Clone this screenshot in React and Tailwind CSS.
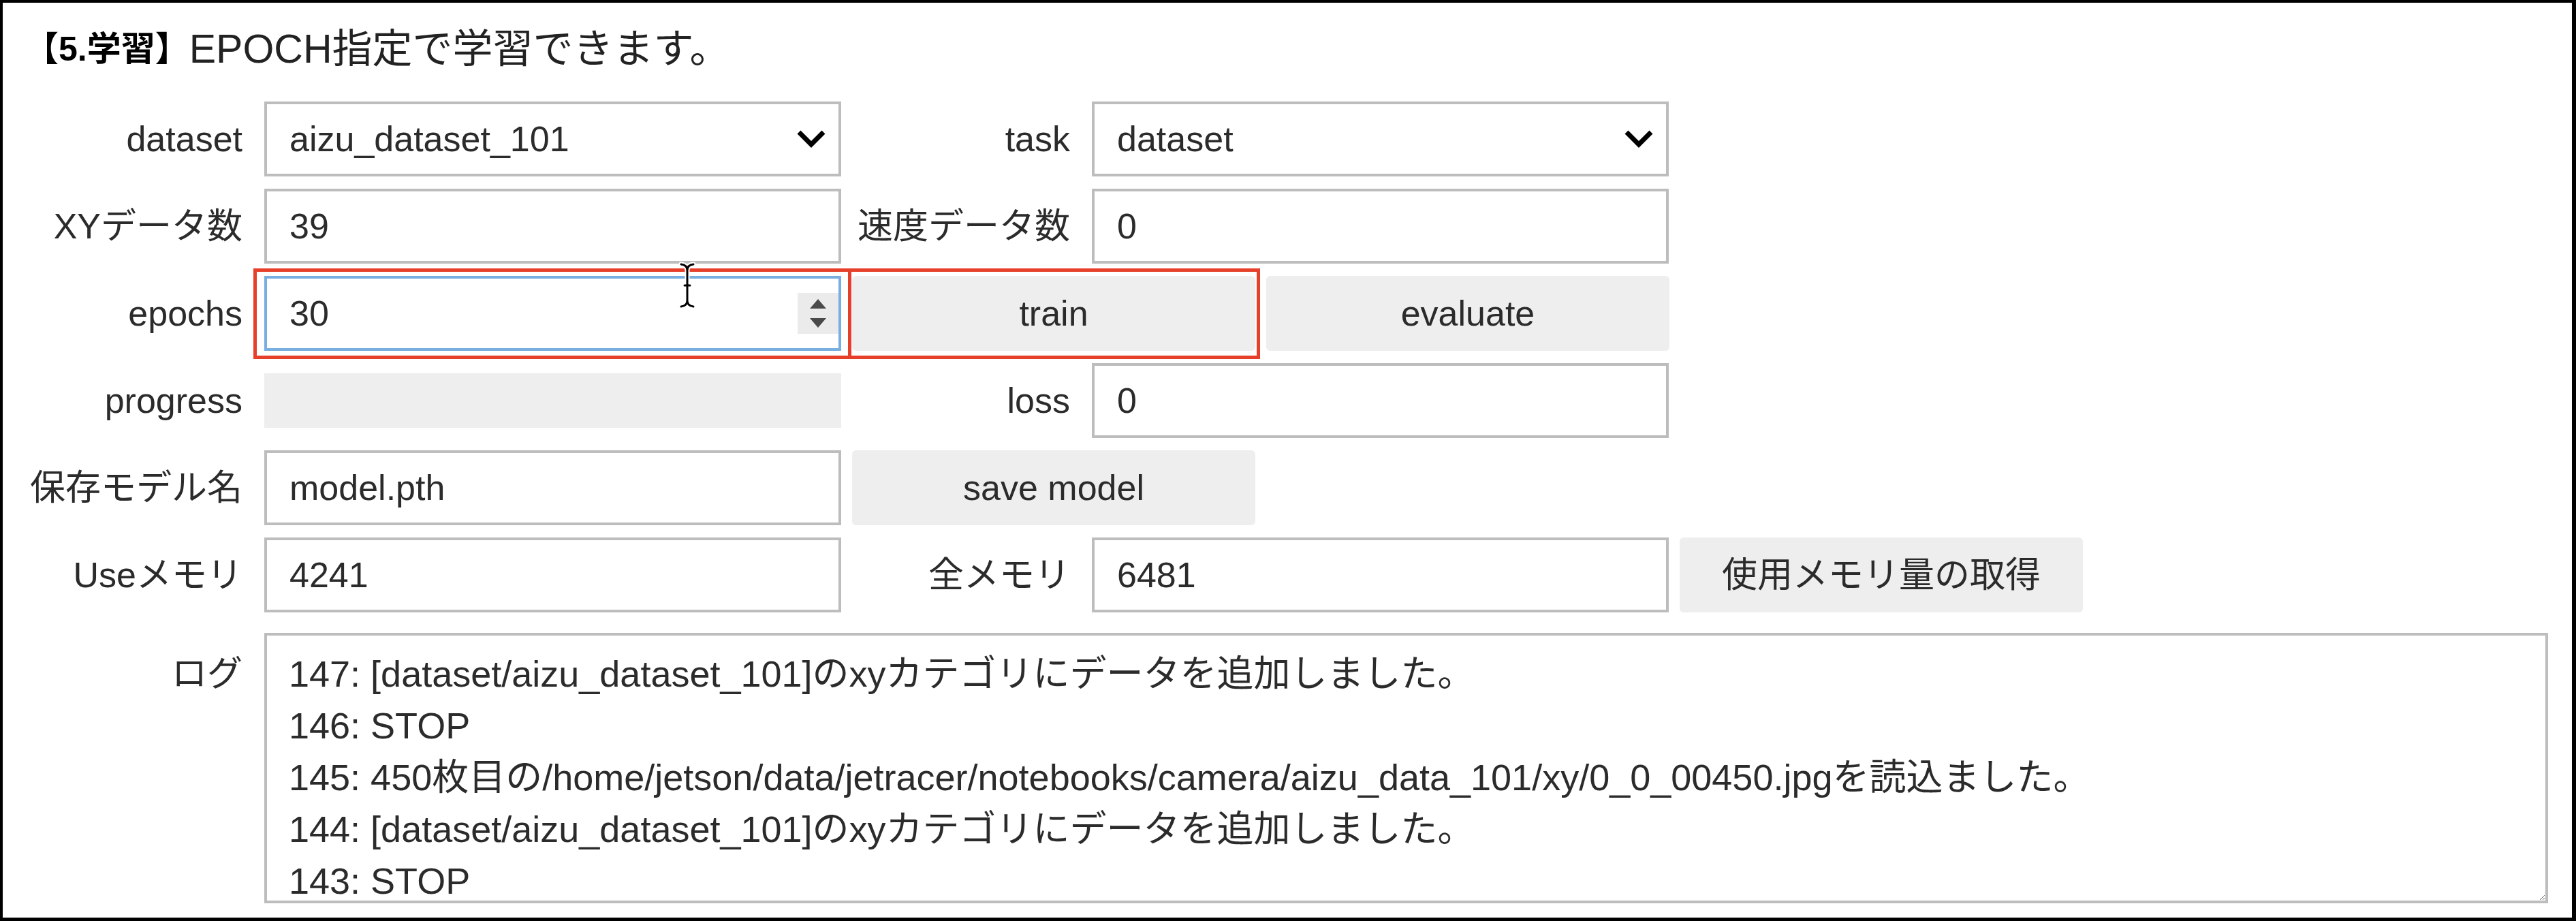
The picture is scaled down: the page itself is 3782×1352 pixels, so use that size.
import React from 'react';

const font = "font-['Liberation_Sans','Noto_Sans_CJK_JP',sans-serif]";

const Label = ({ children }) => (
  <div className="w-[320px] mr-[32px] shrink-0 h-[110px] flex items-center justify-end text-[52px] text-[#2b2b2b] whitespace-nowrap">
    {children}
  </div>
);

const TextBox = ({ value, focus, spinner }) => (
  <div
    className={
      'w-[847px] h-[110px] shrink-0 border-4 bg-white flex items-center pl-[33px] text-[52px] text-[#2b2b2b] ' +
      (focus ? 'border-[#78aee0]' : 'border-[#bdbdbd]')
    }
  >
    <span className="flex-1">{value}</span>
    {spinner && (
      <div className="w-[60px] h-[60px] bg-[#ebebeb] flex flex-col items-center justify-center gap-[14px]">
        <svg width="24" height="14" viewBox="0 0 24 14">
          <path d="M12 0 L24 14 L0 14 Z" fill="#4a4a4a" />
        </svg>
        <svg width="24" height="14" viewBox="0 0 24 14">
          <path d="M0 0 L24 0 L12 14 Z" fill="#4a4a4a" />
        </svg>
      </div>
    )}
  </div>
);

const Select = ({ value }) => (
  <div className="w-[847px] h-[110px] shrink-0 border-4 border-[#bdbdbd] bg-white flex items-center pl-[33px] pr-[18px] text-[52px] text-[#2b2b2b]">
    <span className="flex-1">{value}</span>
    <svg width="44" height="30" viewBox="0 0 44 30">
      <polyline points="4,5 22,23 40,5" fill="none" stroke="#000" strokeWidth="7" />
    </svg>
  </div>
);

const Button = ({ children }) => (
  <div className="w-[592px] h-[110px] shrink-0 bg-[#eeeeee] rounded-[6px] flex items-center justify-center text-[52px] text-[#2b2b2b]">
    {children}
  </div>
);

const Row = ({ children, className = '' }) => (
  <div className={'flex items-center gap-[16px] ' + className}>{children}</div>
);

const Field = ({ label, children }) => (
  <div className="flex items-center">
    <Label>{label}</Label>
    {children}
  </div>
);

const logText = [
  '147: [dataset/aizu_dataset_101]のxyカテゴリにデータを追加しました。',
  '146: STOP',
  '145: 450枚目の/home/jetson/data/jetracer/notebooks/camera/aizu_data_101/xy/0_0_00450.jpgを読込ました。',
  '144: [dataset/aizu_dataset_101]のxyカテゴリにデータを追加しました。',
  '143: STOP',
  '142: 449枚目の/home/jetson/data/jetracer/notebooks/camera/aizu_data_101/xy/0_0_00449.jpgを読込ました。',
].join('\n');

export default function App() {
  return (
    <div className={'relative w-[3782px] h-[1352px] bg-white border-black border-t-4 border-l-4 border-r-[6px] border-b-[5px] pl-[32px] pt-[30px] ' + font}>
      {/* title */}
      <div className="h-[76px] leading-[76px] text-[#222] whitespace-nowrap flex items-center">
        <span className="font-bold text-black text-[50px]">【5.学習】</span>
        <span className="text-[59px]">EPOCH指定で学習できます。</span>
      </div>

      <div className="mt-[39px] flex flex-col gap-[18px]">
        <Row>
          <Field label="dataset"><Select value="aizu_dataset_101" /></Field>
          <Field label="task"><Select value="dataset" /></Field>
        </Row>
        <Row>
          <Field label="XYデータ数"><TextBox value="39" /></Field>
          <Field label="速度データ数"><TextBox value="0" /></Field>
        </Row>
        <Row>
          <Field label="epochs"><TextBox value="30" focus spinner /></Field>
          <Button>train</Button>
          <Button>evaluate</Button>
        </Row>
        <Row>
          <Field label="progress">
            <div className="w-[847px] h-[80px] shrink-0 bg-[#eeeeee]" />
          </Field>
          <Field label="loss"><TextBox value="0" /></Field>
        </Row>
        <Row>
          <Field label="保存モデル名"><TextBox value="model.pth" /></Field>
          <Button>save model</Button>
        </Row>
        <Row>
          <Field label="Useメモリ"><TextBox value="4241" /></Field>
          <Field label="全メモリ"><TextBox value="6481" /></Field>
          <Button>使用メモリ量の取得</Button>
        </Row>
        <div className="flex items-start mt-[12px]">
          <div className="w-[320px] mr-[32px] shrink-0 h-[76px] mt-[22px] flex items-center justify-end text-[52px] text-[#2b2b2b]">
            ログ
          </div>
          <textarea
            readOnly
            wrap="off"
            value={logText}
            className="w-[3353px] h-[397px] border-4 border-[#bdbdbd] bg-white pl-[32px] pt-[18px] text-[54px] leading-[76px] text-[#2b2b2b] overflow-hidden resize-y outline-none"
          />
        </div>
      </div>

      {/* red highlight annotations */}
      <div className="absolute left-[368px] top-[390px] w-[878px] h-[133px] border-[5px] border-[#e6402a]" />
      <div className="absolute left-[1241px] top-[390px] w-[605px] h-[133px] border-[5px] border-[#e6402a]" />

      {/* mouse text cursor */}
      <svg className="absolute left-[991px] top-[380px]" width="28" height="70" viewBox="0 0 28 70">
        <g fill="none" strokeLinecap="round">
          <path d="M5 4 Q14 5 14 13 Q14 5 23 4 M14 13 V57 M5 66 Q14 65 14 57 Q14 65 23 66" stroke="#fff" strokeWidth="7" />
          <path d="M5 4 Q14 5 14 13 Q14 5 23 4 M14 13 V57 M5 66 Q14 65 14 57 Q14 65 23 66 M10 35 H18" stroke="#000" strokeWidth="3" />
        </g>
      </svg>
    </div>
  );
}
